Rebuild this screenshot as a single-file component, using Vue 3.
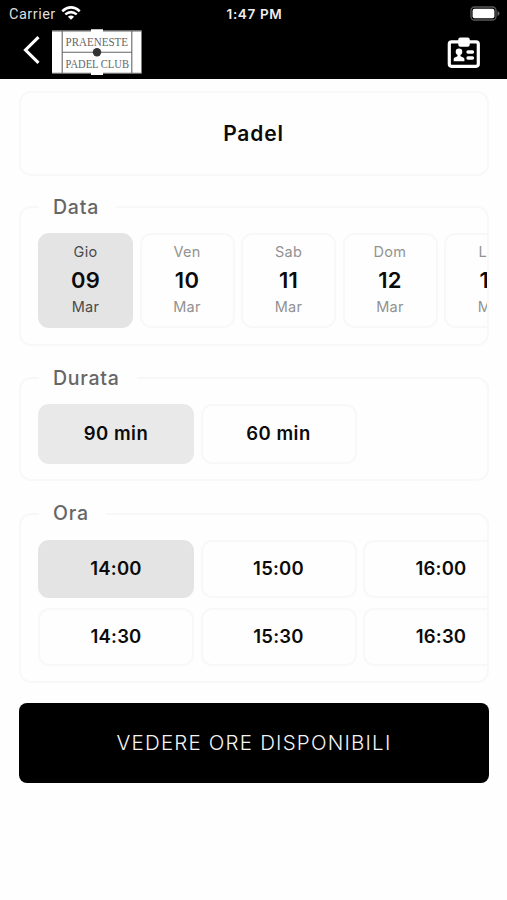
<script setup>
const days = [
  { name: 'Gio', num: '09', active: true },
  { name: 'Ven', num: '10' },
  { name: 'Sab', num: '11' },
  { name: 'Dom', num: '12' },
  { name: 'Lun', num: '13' },
]
const durations = ['90 min', '60 min']
const hours = ['14:00', '15:00', '16:00', '14:30', '15:30', '16:30']
</script>

<template>
  <div class="screen">
    <header>
      <div class="status">
        <div class="carrier">
          <span>Carrier</span>
          <svg width="20" height="14" viewBox="0 0 20 14" fill="none" stroke="#fff" stroke-width="2.5">
            <path d="M1.2 5.2Q10-2.4 18.8 5.2M4.3 8.4Q10 3.8 15.7 8.4" />
            <path d="M10 13.8L6.9 10.7Q10 8.2 13.1 10.7Z" fill="#fff" stroke="none" />
          </svg>
        </div>
        <span class="clock">1:47 PM</span>
        <svg class="battery" width="30" height="16" viewBox="0 0 30 16">
          <rect x="1" y="1" width="25" height="13" rx="3.5" fill="none" stroke="#5a5a5a" stroke-width="1.3" />
          <rect x="2.6" y="2.7" width="21.8" height="9.6" rx="2" fill="#fff" />
          <path d="M27.5 5v5q2-.8 2-2.5t-2-2.5" fill="#666" />
        </svg>
      </div>
      <div class="nav">
        <svg class="back" width="18" height="28" viewBox="0 0 18 28" fill="none" stroke="#fff" stroke-width="3.1">
          <path d="M15.5 1.2L2.5 14 15.5 26.8" />
        </svg>
        <svg class="logo" width="90" height="47" viewBox="0 0 90 47">
          <path d="M0 1.5h39V.5h12v1h38.5v43H51V46H39v-1.500H0z" fill="#fff" />
          <path d="M0 1.9h89.500M0 44.200h89.500M10.200 1.700v42.600M79.800 1.700v42.600M10.200 23.300h69.600" fill="none" stroke="#666" stroke-width="1.1" />
          <path d="M39 .5h12v3H39zM39 43h12v3H39z" fill="#fff" />
          <circle cx="45" cy="23.3" r="4.2" fill="#333" />
          <text x="13.5" y="16.5" textLength="62.5" lengthAdjust="spacingAndGlyphs">PRAENESTE</text>
          <text x="13.5" y="39" textLength="63.5" lengthAdjust="spacingAndGlyphs">PADEL CLUB</text>
        </svg>
        <svg class="card-icon" width="34" height="32" viewBox="0 0 34 32">
          <rect x="2.3" y="4.8" width="29" height="24.5" rx="2.2" fill="none" stroke="#fff" stroke-width="3.2" />
          <rect x="11.3" y="0.5" width="11.4" height="9.3" rx="2" fill="#fff" />
          <circle cx="12" cy="14.7" r="3.3" fill="#fff" />
          <path d="M10.5 17h3v2.3l3.2 1.5q.7.4.7 1.5v2H6.700v-2q0-1.100.7-1.500l3.100-1.500z" fill="#fff" />
          <path d="M21 15h4.500M21 21h4.500" stroke="#fff" stroke-width="3.3" stroke-linecap="round" />
        </svg>
      </div>
    </header>

    <main>
      <section class="sport"><span>Padel</span></section>

      <section class="group dates">
        <h2>Data</h2>
        <div class="row">
          <div v-for="d in days" :key="d.num" class="tile day" :class="{ active: d.active }">
            <span class="small">{{ d.name }}</span>
            <span class="num">{{ d.num }}</span>
            <span class="small">Mar</span>
          </div>
        </div>
      </section>

      <section class="group durations">
        <h2>Durata</h2>
        <div class="row">
          <div v-for="(d, i) in durations" :key="d" class="tile" :class="{ active: i === 0 }">{{ d }}</div>
        </div>
      </section>

      <section class="group hours">
        <h2>Ora</h2>
        <div class="row">
          <div v-for="(h, i) in hours" :key="h" class="tile" :class="{ active: i === 0 }">{{ h }}</div>
        </div>
      </section>

      <button>VEDERE ORE DISPONIBILI</button>
    </main>
  </div>
</template>

<style>
body { margin: 0; background: #fefefe; }
</style>

<style scoped>
* { box-sizing: border-box; }
.screen {
  width: 507px;
  height: 900px;
  overflow: hidden;
  background: #fefefe;
  color: #0b0b0b;
  font-family: Inter, "Liberation Sans", sans-serif;
}
header {
  height: 79px;
  background: #000;
  color: #fff;
}
.status {
  height: 28px;
  display: grid;
  grid-template-columns: 1fr auto 1fr;
  align-items: center;
  padding: 0 7px 0 9px;
}
.carrier {
  display: flex;
  align-items: center;
  gap: 5px;
  font-family: Roboto, sans-serif;
  font-size: 14.5px;
  letter-spacing: .5px;
  color: #ddd;
}
.carrier svg { margin-bottom: 2px; }
.clock { font-size: 13.5px; font-weight: 600; letter-spacing: .65px; color: #eee; }
.battery { justify-self: end; margin-bottom: 1px; }
.nav {
  display: flex;
  align-items: flex-start;
  padding: 1px 26px 0 23px;
}
.back { margin-top: 7px; }
.logo { margin-left: 11px; }
.logo text { font-family: "Liberation Serif", serif; font-size: 11.5px; fill: #666; }
.card-icon { margin: 8px 0 0 auto; }
main {
  display: flex;
  flex-direction: column;
  padding: 12px 18px 0 19px;
}
.sport {
  height: 85px;
  border: 2px solid #f8f8f8;
  border-radius: 12px;
  display: flex;
  align-items: center;
  justify-content: center;
  font-size: 21px;
  font-weight: 600;
  padding-right: 1px;
  letter-spacing: .85px;
}
.group {
  display: flex;
  flex-direction: column;
  border: 2px solid #f8f8f8;
  border-radius: 12px;
}
.dates { margin-top: 30px; height: 140px; }
.durations { margin-top: 31px; height: 104px; }
.hours { margin-top: 32px; height: 170px; }
h2 {
  align-self: flex-start;
  height: 26px;
  margin: -14px 0 0 18px;
  padding: 0 17px 0 14px;
  background: #fefefe;
  font-size: 19.5px;
  line-height: 26px;
  font-weight: 500;
  letter-spacing: .75px;
  color: #666;
}
.hours h2 { line-height: 25px; }
.row {
  display: grid;
  grid-auto-flow: column;
  justify-content: start;
  gap: 6.5px;
  padding-left: 17px;
  margin-top: 13px;
  overflow: hidden;
}
.hours .row {
  grid-auto-flow: row;
  grid-template-columns: repeat(3, 156px);
  row-gap: 10px;
}
.tile {
  width: 156px;
  height: 60px;
  border: 2px solid #f8f8f8;
  border-radius: 11px;
  display: flex;
  align-items: center;
  justify-content: center;
  font-size: 18.5px;
  font-weight: 600;
  letter-spacing: .2px;
}
.hours .tile { height: 58px; padding-bottom: 3px; }
.durations .tile { padding-bottom: 2px; letter-spacing: .5px; }
.tile.active { background: #e4e4e4; border-color: #e4e4e4; }
.durations .active { background: #e9e9e9; border-color: #e9e9e9; }
.durations .row { margin-top: 13px; }
.tile.day {
  width: 95px;
  height: 95px;
  flex-direction: column;
  padding-bottom: 2px;
}
.small { font-size: 14.5px; font-weight: 400; color: #929292; letter-spacing: .3px; line-height: 26px; }
.active .small { color: #4a4a4a; }
.num { font-size: 22px; line-height: 27px; padding-top: 2px; letter-spacing: .3px; }
button {
  margin-top: 20px;
  height: 80px;
  padding: 0 0 1px;
  border: 0;
  border-radius: 8px;
  background: #000;
  color: #f4f4f4;
  font: 300 20.5px Inter, sans-serif;
  letter-spacing: 1.2px;
}
</style>
